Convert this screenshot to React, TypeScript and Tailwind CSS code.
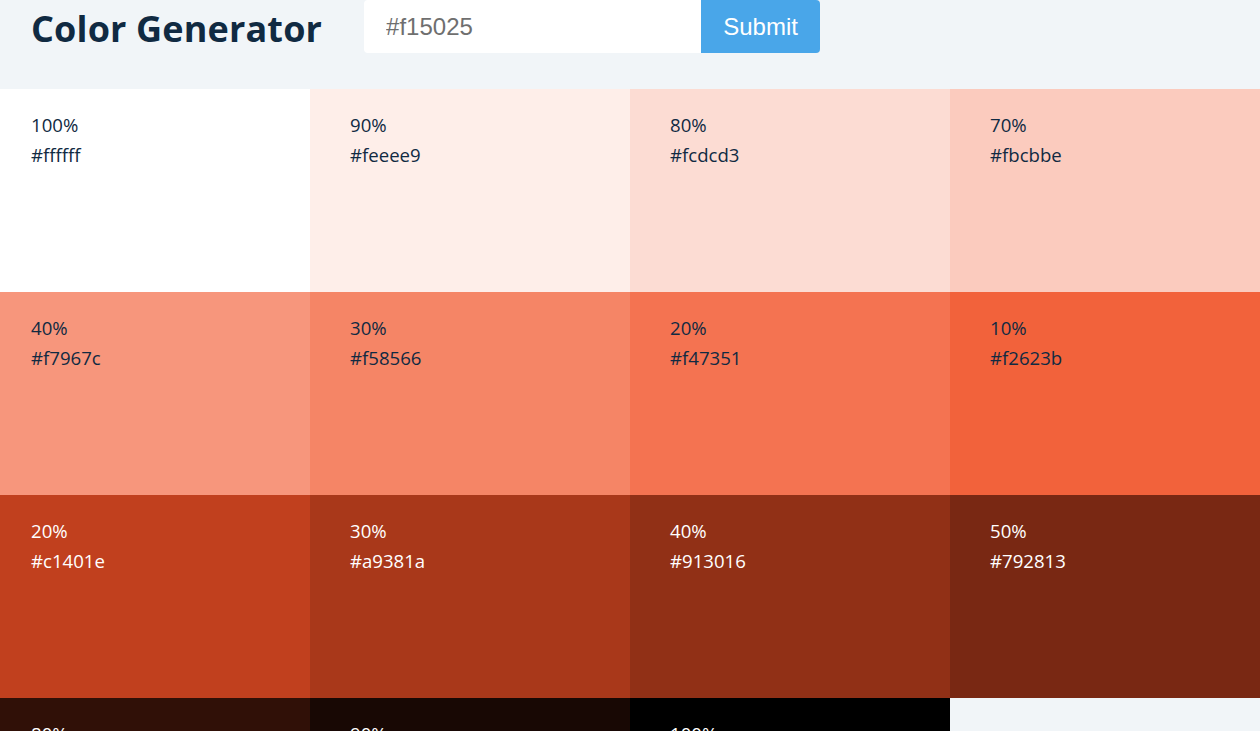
import React from "react";

type Cell = { w: string; hex: string; dark: boolean };

const rows: Cell[][] = [
  [
    { w: "100%", hex: "#ffffff", dark: false },
    { w: "90%", hex: "#feeee9", dark: false },
    { w: "80%", hex: "#fcdcd3", dark: false },
    { w: "70%", hex: "#fbcbbe", dark: false },
  ],
  [
    { w: "40%", hex: "#f7967c", dark: false },
    { w: "30%", hex: "#f58566", dark: false },
    { w: "20%", hex: "#f47351", dark: false },
    { w: "10%", hex: "#f2623b", dark: false },
  ],
  [
    { w: "20%", hex: "#c1401e", dark: true },
    { w: "30%", hex: "#a9381a", dark: true },
    { w: "40%", hex: "#913016", dark: true },
    { w: "50%", hex: "#792813", dark: true },
  ],
  [
    { w: "80%", hex: "#301007", dark: true },
    { w: "90%", hex: "#180804", dark: true },
    { w: "100%", hex: "#000000", dark: true },
  ],
];

export default function App() {
  return (
    <div
      className="w-[1260px] h-[731px] overflow-hidden bg-[#f1f5f8]"
      style={{ fontFamily: '"Open Sans", sans-serif' }}
    >
      <header className="h-[89px] flex items-start pl-[31px]">
        <h3 className="mt-[11px] text-[36px] leading-[36px] font-bold tracking-[0.15px] text-[#102a42]">
          Color Generator
        </h3>
        <form className="ml-[42px] flex">
          <input
            type="text"
            defaultValue="#f15025"
            className="w-[337px] h-[53px] bg-white rounded-l-[4px] pl-[22px] text-[24px] text-[#6f6f6f] outline-none"
            style={{ fontFamily: '"Liberation Sans", Arial, sans-serif' }}
          />
          <button
            type="button"
            className="w-[119px] h-[53px] bg-[#49a6e9] text-white text-[24px] rounded-r-[4px]"
            style={{ fontFamily: '"Liberation Sans", Arial, sans-serif' }}
          >
            Submit
          </button>
        </form>
      </header>
      <section className="grid grid-cols-[310px_320px_320px_310px] auto-rows-[203px]">
        {rows.flatMap((row, ri) =>
          row.map((c, ci) => (
            <article
              key={`${ri}-${ci}`}
              className={`pt-[21px] ${ci === 0 ? "pl-[31px]" : "pl-[40px]"} text-[18.6px] leading-[30px] ${
                c.dark ? "text-white" : "text-[#102a42]"
              }`}
              style={{ backgroundColor: c.hex }}
            >
              <p>{c.w}</p>
              <p>{c.hex}</p>
            </article>
          ))
        )}
      </section>
    </div>
  );
}
